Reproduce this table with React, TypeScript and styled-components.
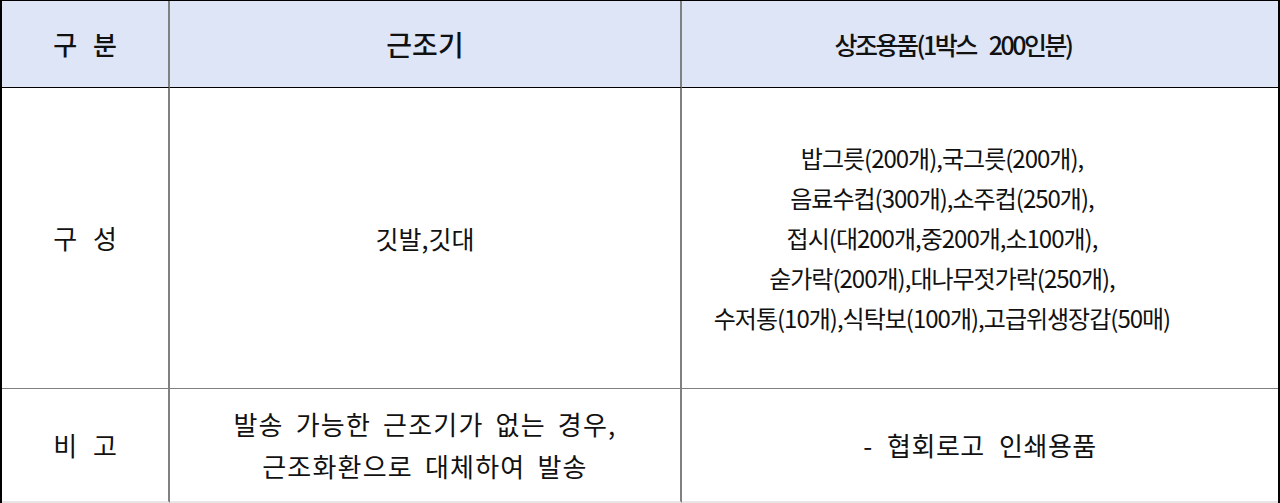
import React from "react";
import styled, { createGlobalStyle } from "styled-components";

const Global = createGlobalStyle`
  html, body { margin: 0; padding: 0; background: #fff; }
  body { font-family: "Noto Sans CJK KR", "Noto Sans", sans-serif; color: #111; }
`;

const Table = styled.div`
  display: grid;
  grid-template-columns: 168px 512px 1fr;
  grid-template-rows: 87px 301px 114px;
  width: 1280px;
  box-sizing: border-box;
  border-top: 1px solid #000;
  border-left: 2px solid #000;
  border-right: 2px solid #000;
`;

const Cell = styled.div<{ $head?: boolean; $last?: boolean; $bottom?: string }>`
  display: flex;
  align-items: center;
  justify-content: center;
  text-align: center;
  box-sizing: border-box;
  background: ${(p) => (p.$head ? "#dee5f6" : "#fff")};
  border-right: ${(p) => (p.$last ? "none" : "2px solid #808080")};
  border-bottom: ${(p) => p.$bottom ?? "1px solid #808080"};
`;

const Text = styled.div<{
  $size: number;
  $ls?: number;
  $ws?: number;
  $lh?: number;
  $weight?: number;
  $pr?: number;
}>`
  font-size: ${(p) => p.$size}px;
  letter-spacing: ${(p) => p.$ls ?? 0}px;
  word-spacing: ${(p) => p.$ws ?? 0}px;
  line-height: ${(p) => p.$lh ?? 40}px;
  font-weight: ${(p) => p.$weight ?? 400};
  padding-right: ${(p) => p.$pr ?? 0}px;
  white-space: pre;
`;

type C = {
  content: React.ReactNode;
  size: number;
  ls?: number;
  ws?: number;
  lh?: number;
  weight?: number;
  pr?: number;
};

const rows: { cells: C[]; head?: boolean; bottom?: string }[] = [
  {
    head: true,
    bottom: "1px solid #000",
    cells: [
      { content: "구 분", size: 26, ws: 10, weight: 500 },
      { content: "근조기", size: 28, weight: 500 },
      { content: "상조용품(1박스 200인분)", size: 25, ls: -2.5, ws: 10, weight: 500, pr: 54 },
    ],
  },
  {
    cells: [
      { content: "구 성", size: 26, ws: 10 },
      { content: "깃발,깃대", size: 25 },
      {
        size: 24,
        ls: -1,
        pr: 76,
        content: (
          <>
            밥그릇(200개),국그릇(200개),
            <br />
            음료수컵(300개),소주컵(250개),
            <br />
            접시(대200개,중200개,소100개),
            <br />
            숟가락(200개),대나무젓가락(250개),
            <br />
            수저통(10개),식탁보(100개),고급위생장갑(50매)
          </>
        ),
      },
    ],
  },
  {
    bottom: "2px solid #e6e6e6",
    cells: [
      { content: "비 고", size: 26, ws: 10 },
      {
        size: 26,
        ls: 1.2,
        ws: 5,
        lh: 42,
        content: (
          <>
            발송 가능한 근조기가 없는 경우,
            <br />
            근조화환으로 대체하여 발송
          </>
        ),
      },
      { content: "- 협회로고 인쇄용품", size: 26, ls: 0.5, ws: 8 },
    ],
  },
];

export default function App() {
  return (
    <>
      <Global />
      <Table>
        {rows.map((r, ri) =>
          r.cells.map((c, ci) => (
            <Cell key={`${ri}-${ci}`} $head={r.head} $last={ci === 2} $bottom={r.bottom}>
              <Text
                $size={c.size}
                $ls={c.ls}
                $ws={c.ws}
                $lh={c.lh}
                $weight={c.weight}
                $pr={c.pr}
              >
                {c.content}
              </Text>
            </Cell>
          ))
        )}
      </Table>
    </>
  );
}
